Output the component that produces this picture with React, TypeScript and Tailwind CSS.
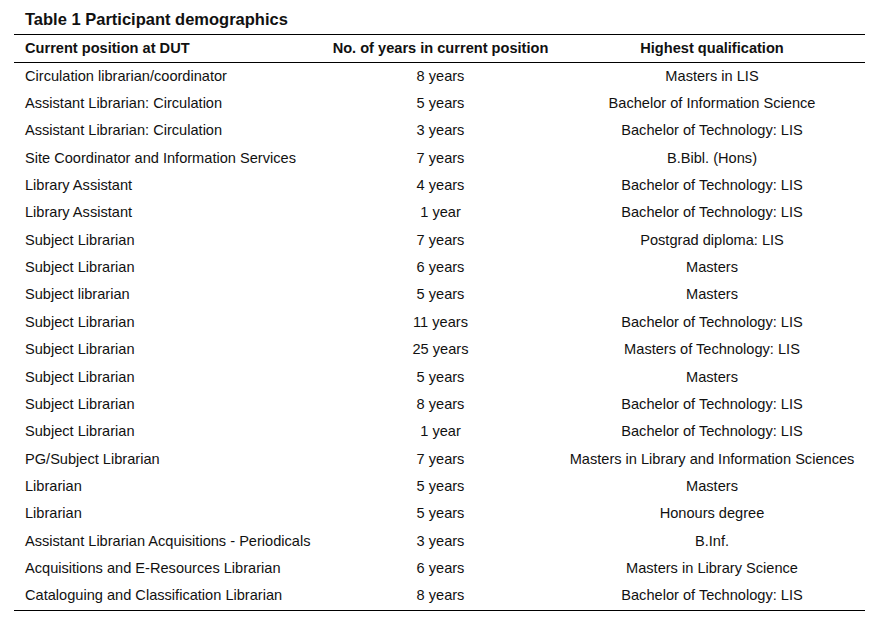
import React from 'react';

const rows: [string, string, string][] = [
  ['Circulation librarian/coordinator', '8 years', 'Masters in LIS'],
  ['Assistant Librarian: Circulation', '5 years', 'Bachelor of Information Science'],
  ['Assistant Librarian: Circulation', '3 years', 'Bachelor of Technology: LIS'],
  ['Site Coordinator and Information Services', '7 years', 'B.Bibl. (Hons)'],
  ['Library Assistant', '4 years', 'Bachelor of Technology: LIS'],
  ['Library Assistant', '1 year', 'Bachelor of Technology: LIS'],
  ['Subject Librarian', '7 years', 'Postgrad diploma: LIS'],
  ['Subject Librarian', '6 years', 'Masters'],
  ['Subject librarian', '5 years', 'Masters'],
  ['Subject Librarian', '11 years', 'Bachelor of Technology: LIS'],
  ['Subject Librarian', '25 years', 'Masters of Technology: LIS'],
  ['Subject Librarian', '5 years', 'Masters'],
  ['Subject Librarian', '8 years', 'Bachelor of Technology: LIS'],
  ['Subject Librarian', '1 year', 'Bachelor of Technology: LIS'],
  ['PG/Subject Librarian', '7 years', 'Masters in Library and Information Sciences'],
  ['Librarian', '5 years', 'Masters'],
  ['Librarian', '5 years', 'Honours degree'],
  ['Assistant Librarian Acquisitions - Periodicals', '3 years', 'B.Inf.'],
  ['Acquisitions and E-Resources Librarian', '6 years', 'Masters in Library Science'],
  ['Cataloguing and Classification Librarian', '8 years', 'Bachelor of Technology: LIS'],
];

const App: React.FC = () => {
  return (
    <div className="w-[883px] h-[622px] bg-white text-[#111] font-['Liberation_Sans',Arial,sans-serif] pl-[14px] pt-[10px]">
      <h1 className="pl-[11px] text-[16.5px] leading-[19px] font-bold mb-[5px]">Table 1 Participant demographics</h1>

      <div className="w-[851px] border-t border-b border-black">
        {/* header */}
        <div className="grid grid-cols-[308px_237px_306px] h-[28px] border-b border-black text-[14.6px] font-bold items-center">
          <div className="pl-[11px]">Current position at DUT</div>
          <div className="text-center">No. of years in current position</div>
          <div className="text-center">Highest qualification</div>
        </div>

        {rows.map(([pos, years, qual], i) => (
          <div key={i} className="grid grid-cols-[308px_237px_306px] h-[27.35px] text-[14.6px] items-center">
            <div className="pl-[11px] whitespace-nowrap">{pos}</div>
            <div className="text-center">{years}</div>
            <div className="text-center whitespace-nowrap">{qual}</div>
          </div>
        ))}
      </div>
    </div>
  );
};

export default App;
